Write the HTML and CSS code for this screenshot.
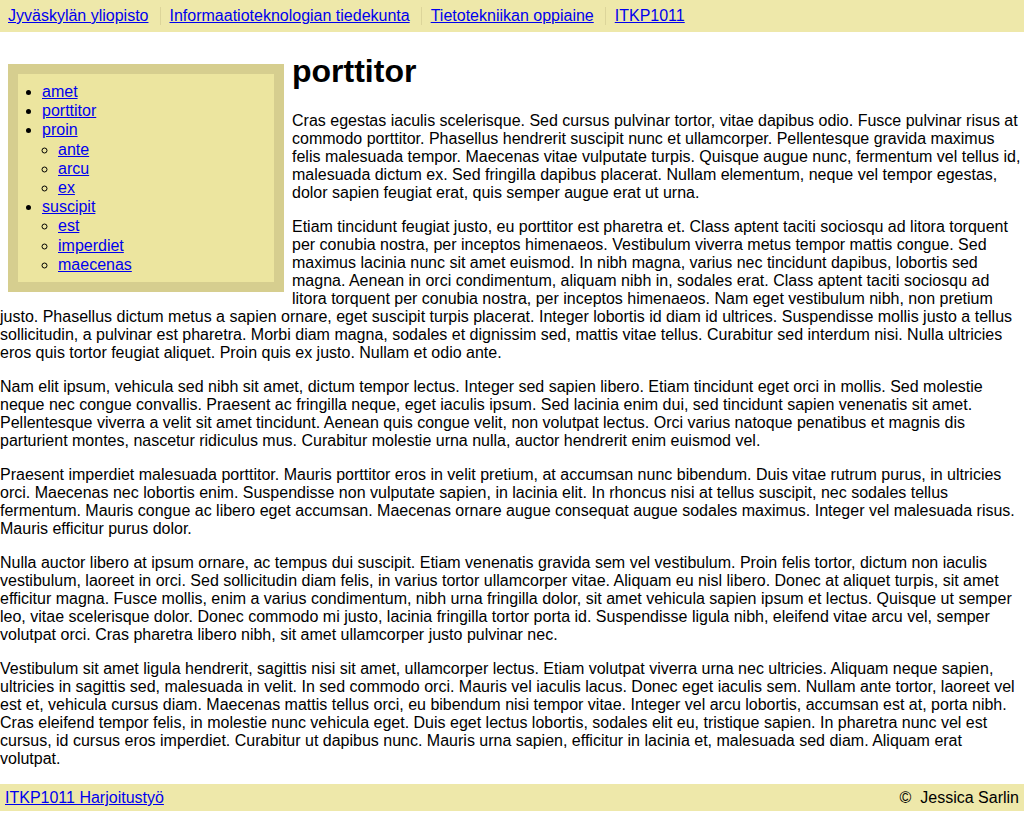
FILE: index.html
```html
<!DOCTYPE html>
<html lang="fi">
<head>
<meta charset="utf-8">
<title>porttitor</title>
<link rel="stylesheet" href="styles.css">
</head>
<body>
<header class="topbar">
  <nav class="crumbs">
    <a class="crumb" href="#">Jyväskylän yliopisto</a>
    <a class="crumb" href="#">Informaatioteknologian tiedekunta</a>
    <a class="crumb" href="#">Tietotekniikan oppiaine</a>
    <a class="crumb" href="#">ITKP1011</a>
  </nav>
</header>
<div class="page">
  <aside class="sidebar">
    <ul class="menu">
      <li><a href="#">amet</a></li>
      <li><a href="#">porttitor</a></li>
      <li><a href="#">proin</a>
        <ul class="submenu">
          <li><a href="#">ante</a></li>
          <li><a href="#">arcu</a></li>
          <li><a href="#">ex</a></li>
        </ul>
      </li>
      <li><a href="#">suscipit</a>
        <ul class="submenu">
          <li><a href="#">est</a></li>
          <li><a href="#">imperdiet</a></li>
          <li><a href="#">maecenas</a></li>
        </ul>
      </li>
    </ul>
  </aside>
  <h1 class="title">porttitor</h1>
  <p>Cras egestas iaculis scelerisque. Sed cursus pulvinar tortor, vitae dapibus odio. Fusce pulvinar risus at commodo porttitor. Phasellus hendrerit suscipit nunc et ullamcorper. Pellentesque gravida maximus felis malesuada tempor. Maecenas vitae vulputate turpis. Quisque augue nunc, fermentum vel tellus id, malesuada dictum ex. Sed fringilla dapibus placerat. Nullam elementum, neque vel tempor egestas, dolor sapien feugiat erat, quis semper augue erat ut urna.</p>
  <p>Etiam tincidunt feugiat justo, eu porttitor est pharetra et. Class aptent taciti sociosqu ad litora torquent per conubia nostra, per inceptos himenaeos. Vestibulum viverra metus tempor mattis congue. Sed maximus lacinia nunc sit amet euismod. In nibh magna, varius nec tincidunt dapibus, lobortis sed magna. Aenean in orci condimentum, aliquam nibh in, sodales erat. Class aptent taciti sociosqu ad litora torquent per conubia nostra, per inceptos himenaeos. Nam eget vestibulum nibh, non pretium justo. Phasellus dictum metus a sapien ornare, eget suscipit turpis placerat. Integer lobortis id diam id ultrices. Suspendisse mollis justo a tellus sollicitudin, a pulvinar est pharetra. Morbi diam magna, sodales et dignissim sed, mattis vitae tellus. Curabitur sed interdum nisi. Nulla ultricies eros quis tortor feugiat aliquet. Proin quis ex justo. Nullam et odio ante.</p>
  <p>Nam elit ipsum, vehicula sed nibh sit amet, dictum tempor lectus. Integer sed sapien libero. Etiam tincidunt eget orci in mollis. Sed molestie neque nec congue convallis. Praesent ac fringilla neque, eget iaculis ipsum. Sed lacinia enim dui, sed tincidunt sapien venenatis sit amet. Pellentesque viverra a velit sit amet tincidunt. Aenean quis congue velit, non volutpat lectus. Orci varius natoque penatibus et magnis dis parturient montes, nascetur ridiculus mus. Curabitur molestie urna nulla, auctor hendrerit enim euismod vel.</p>
  <p>Praesent imperdiet malesuada porttitor. Mauris porttitor eros in velit pretium, at accumsan nunc bibendum. Duis vitae rutrum purus, in ultricies orci. Maecenas nec lobortis enim. Suspendisse non vulputate sapien, in lacinia elit. In rhoncus nisi at tellus suscipit, nec sodales tellus fermentum. Mauris congue ac libero eget accumsan. Maecenas ornare augue consequat augue sodales maximus. Integer vel malesuada risus. Mauris efficitur purus dolor.</p>
  <p>Nulla auctor libero at ipsum ornare, ac tempus dui suscipit. Etiam venenatis gravida sem vel vestibulum. Proin felis tortor, dictum non iaculis vestibulum, laoreet in orci. Sed sollicitudin diam felis, in varius tortor ullamcorper vitae. Aliquam eu nisl libero. Donec at aliquet turpis, sit amet efficitur magna. Fusce mollis, enim a varius condimentum, nibh urna fringilla dolor, sit amet vehicula sapien ipsum et lectus. Quisque ut semper leo, vitae scelerisque dolor. Donec commodo mi justo, lacinia fringilla tortor porta id. Suspendisse ligula nibh, eleifend vitae arcu vel, semper volutpat orci. Cras pharetra libero nibh, sit amet ullamcorper justo pulvinar nec.</p>
  <p>Vestibulum sit amet ligula hendrerit, sagittis nisi sit amet, ullamcorper lectus. Etiam volutpat viverra urna nec ultricies. Aliquam neque sapien, ultricies in sagittis sed, malesuada in velit. In sed commodo orci. Mauris vel iaculis lacus. Donec eget iaculis sem. Nullam ante tortor, laoreet vel est et, vehicula cursus diam. Maecenas mattis tellus orci, eu bibendum nisi tempor vitae. Integer vel arcu lobortis, accumsan est at, porta nibh. Cras eleifend tempor felis, in molestie nunc vehicula eget. Duis eget lectus lobortis, sodales elit eu, tristique sapien. In pharetra nunc vel est cursus, id cursus eros imperdiet. Curabitur ut dapibus nunc. Mauris urna sapien, efficitur in lacinia et, malesuada sed diam. Aliquam erat volutpat.</p>
</div>
<footer class="footer">
  <a href="#">ITKP1011 Harjoitustyö</a>
  <span class="author">&copy;&nbsp; Jessica Sarlin</span>
</footer>
</body>
</html>
```
FILE: styles.css
```css
html, body {
  margin: 0;
  padding: 0;
}
body {
  font-family: "Liberation Sans", Arial, sans-serif;
  font-size: 16px;
  line-height: 18px;
  color: #000;
  background: #fff;
}
a {
  color: #0000ee;
}
.topbar {
  background: #eee8aa;
  padding: 7px 8px 7px 8px;
}
.crumbs {
  display: flex;
  align-items: center;
}
.crumb {
  display: block;
  padding: 0 11px 0 9px;
  border-left: 1px solid #dcd59a;
}
.crumb:first-child {
  padding-left: 0;
  border-left: none;
}
.page {
  display: flow-root;
}
.sidebar {
  float: left;
  width: 256px;
  margin: 32px 8px 8px 8px;
  border: 10px solid #d6ce8f;
  background: #ece59f;
  padding: 8px 0;
}
.menu {
  margin: 0;
  padding-left: 24px;
  list-style: disc;
}
.menu li {
  line-height: 19.2px;
}
.submenu {
  margin: 0;
  padding-left: 16px;
  list-style: circle;
}
.title {
  font-size: 32px;
  font-weight: bold;
  line-height: normal;
  margin: 21.44px 0;
}
.page p {
  margin: 16px 0;
}
.footer {
  display: flex;
  justify-content: space-between;
  background: #eee8aa;
  padding: 4px 5px;
  line-height: 19px;
  margin-bottom: 26px;
}
```
